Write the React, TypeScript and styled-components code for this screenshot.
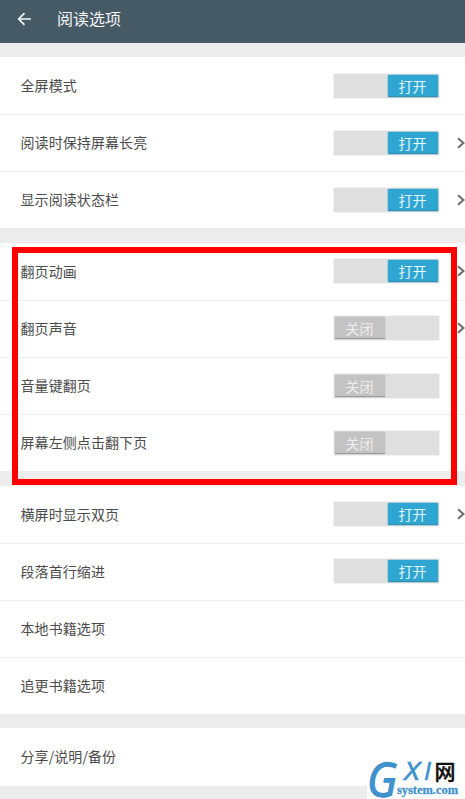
import React from "react";
import styled, { createGlobalStyle } from "styled-components";

const GlobalStyle = createGlobalStyle`
  * { box-sizing: border-box; }
  body {
    margin: 0;
    background: #ededed;
    overflow: hidden;
    font-family: "Noto Sans CJK SC", "Noto Sans", sans-serif;
  }
`;

const Screen = styled.main`
  position: relative;
  width: 465px;
  height: 799px;
  overflow: hidden;
  background: #ededed;
`;

const Header = styled.header`
  display: flex;
  align-items: center;
  height: 42.7px;
  padding: 0 0 5px 17px;
  background: #465a65;
  color: #f4f6f7;
`;

const BackIcon = styled.svg`
  width: 15px;
  height: 14px;
  margin-top: 1px;
`;

const Title = styled.h1`
  margin: 0 0 2px 25px;
  font-size: 16px;
  line-height: 24px;
  font-weight: 400;
`;

const Section = styled.section`
  margin-top: 14.3px;
  background: #fff;
`;

const Row = styled.div`
  display: flex;
  align-items: center;
  height: 57.15px;
  padding-left: 20.5px;
  padding-bottom: 1px;
  border-top: 1px solid #eeeeee;

  &:first-child { border-top-color: transparent; }
`;

const Label = styled.span`
  flex: 1;
  font-size: 14px;
  line-height: 20px;
  letter-spacing: 0.08px;
  margin-top: -1px;
  color: #4c4c4c;
  white-space: nowrap;
`;

const Track = styled.div<{ $on: boolean }>`
  display: flex;
  justify-content: ${(p) => (p.$on ? "flex-end" : "flex-start")};
  width: 105px;
  height: 24px;
  padding: 1px;
  background: #dfdfdf;
  box-shadow: 0 0 0 0.5px #e6e6e6;
`;

const Thumb = styled.span<{ $on: boolean }>`
  width: 50px;
  height: 22px;
  border-radius: 1px;
  font-size: 14px;
  line-height: 22px;
  text-align: center;
  color: ${(p) => (p.$on ? "#e4f6fc" : "#eeeeee")};
  background: ${(p) => (p.$on ? "#2fa6d1" : "#c3c3c3")};
  box-shadow: inset 0 -1px 0 ${(p) => (p.$on ? "#338fb0" : "#999999")},
    0 0 0 0.5px ${(p) => (p.$on ? "#85bfd3" : "#cccccc")};
`;

const Trailing = styled.span`
  display: flex;
  justify-content: flex-end;
  width: 26.5px;
`;

const Chevron = styled.svg`
  width: 8px;
  height: 12px;
`;

const Highlight = styled.div`
  position: absolute;
  left: 12px;
  top: 247px;
  width: 445px;
  height: 238px;
  border: 6px solid #ff0000;
`;

const Watermark = styled.svg`
  position: absolute;
  left: 367px;
  top: 755px;
  width: 98px;
  height: 44px;
  overflow: visible;
`;

type Option = { label: string; on?: boolean; more?: boolean };

const sections: Option[][] = [
  [
    { label: "全屏模式", on: true },
    { label: "阅读时保持屏幕长亮", on: true, more: true },
    { label: "显示阅读状态栏", on: true, more: true },
  ],
  [
    { label: "翻页动画", on: true, more: true },
    { label: "翻页声音", on: false, more: true },
    { label: "音量键翻页", on: false },
    { label: "屏幕左侧点击翻下页", on: false },
  ],
  [
    { label: "横屏时显示双页", on: true, more: true },
    { label: "段落首行缩进", on: true },
    { label: "本地书籍选项" },
    { label: "追更书籍选项" },
  ],
  [{ label: "分享/说明/备份" }],
];

function Toggle({ on }: { on: boolean }) {
  return (
    <Track $on={on}>
      <Thumb $on={on}>{on ? "打开" : "关闭"}</Thumb>
    </Track>
  );
}

function OptionRow({ label, on, more }: Option) {
  return (
    <Row>
      <Label>{label}</Label>
      {on !== undefined && <Toggle on={on} />}
      <Trailing>
        {more && (
          <Chevron viewBox="0 0 8 12" fill="none" stroke="#707070" strokeWidth="2.2">
            <path d="M1 1.2 6.4 6 1 10.8" />
          </Chevron>
        )}
      </Trailing>
    </Row>
  );
}

export default function App() {
  return (
    <>
      <GlobalStyle />
      <Screen>
        <Header>
          <BackIcon viewBox="0 0 15 14" fill="none" stroke="currentColor" strokeWidth="1.7">
            <path d="M14 7H2M7.5 1.2 1.7 7l5.8 5.8" />
          </BackIcon>
          <Title>阅读选项</Title>
        </Header>
        {sections.map((options, i) => (
          <Section key={i}>
            {options.map((option) => (
              <OptionRow key={option.label} {...option} />
            ))}
          </Section>
        ))}
        <Highlight />
        <Watermark viewBox="0 0 98 44">
          <rect width="98" height="44" fill="#fff" />
          <g fill="#3f92cc" stroke="#3f92cc" fontFamily="'Open Sans', sans-serif" fontStyle="italic">
            <text x="0" y="42" fontSize="48" strokeWidth="1.3" textLength="30" lengthAdjust="spacingAndGlyphs">G</text>
            <text x="37.5" y="25" fontSize="25" strokeWidth="0.7" textLength="15" lengthAdjust="spacingAndGlyphs">X</text>
            <text x="57" y="25" fontSize="25" strokeWidth="0.7">I</text>
          </g>
          <text x="67.5" y="23.5" fontSize="21" fontWeight="500" fill="#111" stroke="#111" strokeWidth="0.4" fontFamily="'Noto Sans CJK SC', sans-serif">网</text>
          <text x="30" y="39" fontSize="12" fontWeight="700" fill="#3f92cc" stroke="#3f92cc" strokeWidth="0.3" fontFamily="'Liberation Serif', serif" textLength="61" lengthAdjust="spacingAndGlyphs">system.com</text>
        </Watermark>
      </Screen>
    </>
  );
}
